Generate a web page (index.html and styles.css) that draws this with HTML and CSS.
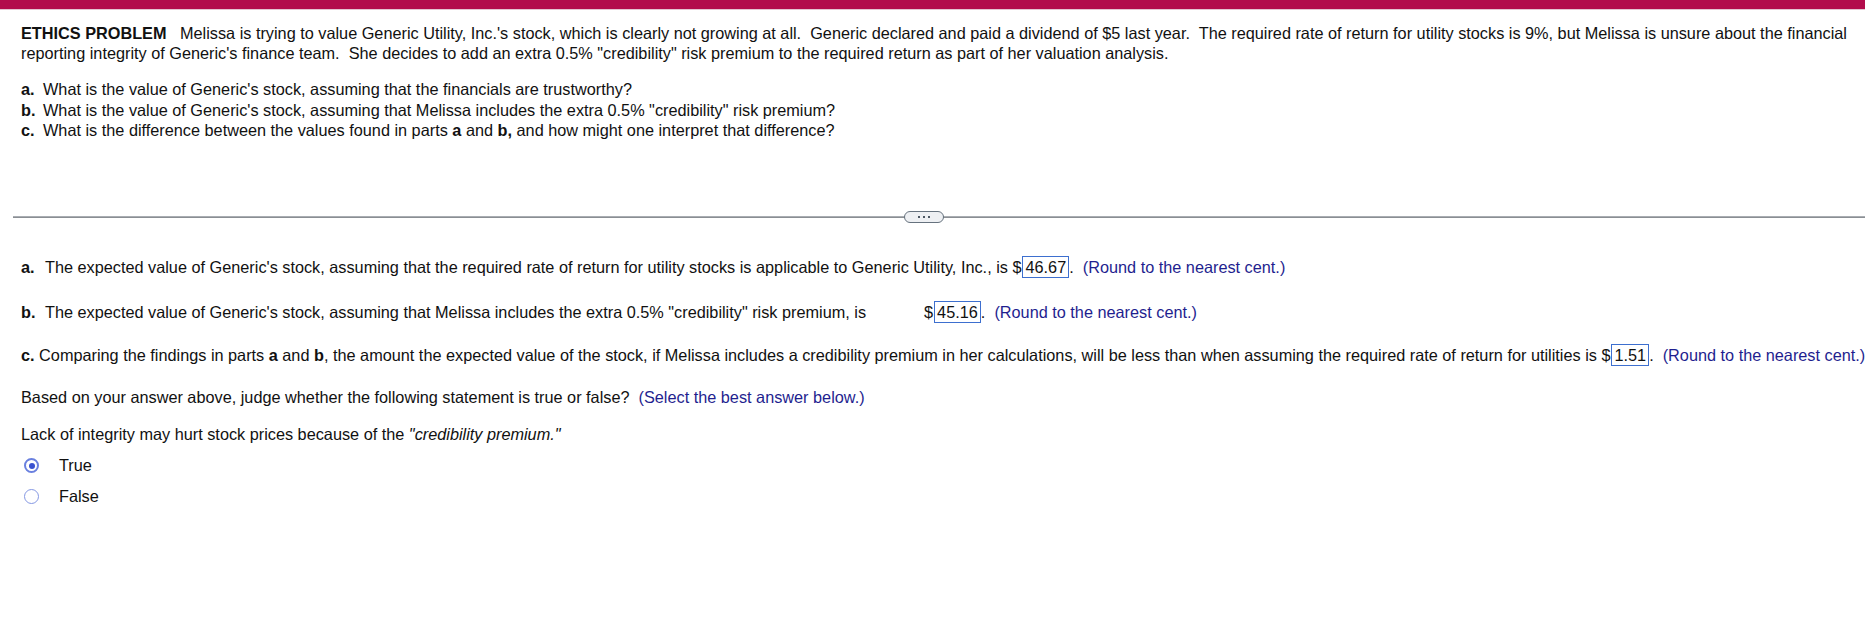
FILE: index.html
```html
<!DOCTYPE html>
<html>
<head>
<meta charset="utf-8">
<link rel="stylesheet" href="styles.css">
</head>
<body>
<div class="topbar"></div>
<div class="page">
  <section class="question">
    <p class="intro"><b class="tag">ETHICS PROBLEM</b> Melissa is trying to value Generic Utility, Inc.'s stock, which is clearly not growing at all.&nbsp; Generic declared and paid a dividend of $5 last year.&nbsp; The required rate of return for utility stocks is 9%, but Melissa is unsure about the financial<br>reporting integrity of Generic's finance team.&nbsp; She decides to add an extra 0.5% "credibility" risk premium to the required return as part of her valuation analysis.</p>
    <ol class="parts">
      <li><b class="lbl">a.</b><span>What is the value of Generic's stock, assuming that the financials are trustworthy?</span></li>
      <li><b class="lbl">b.</b><span>What is the value of Generic's stock, assuming that Melissa includes the extra 0.5% "credibility" risk premium?</span></li>
      <li><b class="lbl">c.</b><span>What is the difference between the values found in parts <b>a</b> and <b>b,</b> and how might one interpret that difference?</span></li>
    </ol>
  </section>

  <div class="divider">
    <span class="more"><i></i><i></i><i></i></span>
  </div>

  <section class="answers">
    <div class="row row-a"><b class="albl">a.</b>The expected value of Generic's stock, assuming that the required rate of return for utility stocks is applicable to Generic Utility, Inc., is $<span class="box">46.67</span>.&nbsp; <span class="hint">(Round to the nearest cent.)</span></div>
    <div class="row row-b"><b class="albl">b.</b>The expected value of Generic's stock, assuming that Melissa includes the extra 0.5% "credibility" risk premium, is<span class="spacer"></span>$<span class="box">45.16</span>.&nbsp; <span class="hint">(Round to the nearest cent.)</span></div>
    <div class="row row-c"><b>c.</b> Comparing the findings in parts <b>a</b> and <b>b</b>, the amount the expected value of the stock, if Melissa includes a credibility premium in her calculations, will be less than when assuming the required rate of return for utilities is $<span class="box">1.51</span>.&nbsp; <span class="hint">(Round to the nearest cent.)</span></div>
    <div class="row row-based">Based on your answer above, judge whether the following statement is true or false?&nbsp; <span class="hint">(Select the best answer below.)</span></div>
    <div class="row row-lack">Lack of integrity may hurt stock prices because of the <i>"credibility premium."</i></div>
    <div class="choice choice-true"><span class="radio checked"></span><span>True</span></div>
    <div class="choice choice-false"><span class="radio"></span><span>False</span></div>
  </section>
</div>
</body>
</html>
```

FILE: styles.css
```css
html, body {
  margin: 0;
  padding: 0;
  background: #fff;
}
body {
  font-family: "Liberation Sans", Arial, sans-serif;
  font-size: 16.27px;
  color: #111;
}
.topbar {
  height: 9px;
  background: #b20d4c;
  border-bottom: 1px solid #e3c6d1;
}
.page {
  padding-left: 21px;
}
.question {
  padding-top: 14px;
}
.intro {
  margin: 0;
  line-height: 19.5px;
  white-space: nowrap;
}
.tag {
  margin-right: 9px;
}
.parts {
  list-style: none;
  margin: 16px 0 0 0;
  padding: 0;
  line-height: 20.5px;
}
.parts li {
  display: flex;
}
.parts .lbl {
  width: 22px;
  flex: none;
}
.divider {
  position: relative;
  margin: 75px 0 0 -8px;
  height: 1px;
  background: #8a8e93;
  border-top: 1px solid #a9adb2;
}
.more {
  position: absolute;
  left: 891px;
  top: -6px;
  width: 38px;
  height: 10px;
  border: 1px solid #66727e;
  border-radius: 6px;
  background: #eef0f3;
  display: flex;
  justify-content: center;
  align-items: center;
  gap: 3px;
}
.more i {
  width: 2px;
  height: 2px;
  background: #4d5864;
}
.answers {
  padding-top: 38px;
}
.row {
  line-height: 20px;
  white-space: nowrap;
}
.albl {
  display: inline-block;
  width: 24px;
}
.row-b {
  margin-top: 23px;
}
.row-c {
  margin-top: 21px;
}
.row-based {
  margin-top: 21px;
}
.row-lack {
  margin-top: 17px;
}
.spacer {
  display: inline-block;
  width: 58px;
}
.box {
  display: inline-block;
  border: 1px solid #3d6fcf;
  padding: 0 2px;
  line-height: 20px;
  margin-left: 1px;
}
.hint {
  color: #1f1f8f;
}
.choice {
  display: flex;
  align-items: center;
  height: 20px;
  margin-left: 2px;
}
.choice-true {
  margin-top: 12px;
}
.choice-false {
  margin-top: 11px;
}
.radio {
  box-sizing: border-box;
  width: 15px;
  height: 15px;
  border: 1.5px solid #8598e3;
  border-radius: 50%;
  margin-left: 1px;
  margin-right: 20px;
  position: relative;
}
.radio.checked {
  border: 2px solid #6a80df;
}
.radio.checked::after {
  content: "";
  position: absolute;
  left: 2.5px;
  top: 2.5px;
  width: 6px;
  height: 6px;
  border-radius: 50%;
  background: #3a52d0;
}
```
